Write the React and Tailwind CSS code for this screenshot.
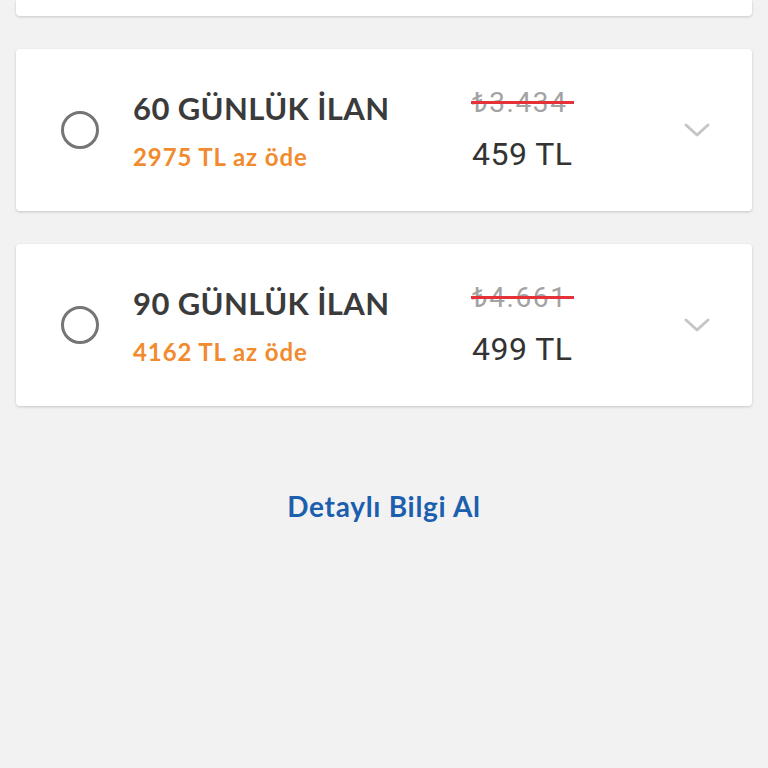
import React from "react";

const plans = [
  { days: 60, save: 2975, oldPrice: "₺3.434", price: "459 TL" },
  { days: 90, save: 4162, oldPrice: "₺4.661", price: "499 TL" },
];

function Chevron() {
  return (
    <svg width="26" height="16" viewBox="0 0 26 16" fill="none">
      <path d="M2 3l11 10L24 3" stroke="#c6c6c6" strokeWidth="3" strokeLinecap="round" strokeLinejoin="round" />
    </svg>
  );
}

function PlanCard({ plan }) {
  return (
    <div className="h-[162px] bg-white rounded-[4px] shadow-[0_1px_3px_rgba(0,0,0,0.18)] flex items-center pl-[45px]">
      <div className="w-[38px] h-[38px] rounded-full border-[3.5px] border-[#757575] shrink-0" />
      <div className="ml-[34px] w-[339px] flex flex-col">
        <div className="text-[31px] leading-[38px] tracking-[0.4px] font-bold text-[#3b3b3b] font-['Lato',sans-serif]">
          {plan.days} GÜNLÜK İLAN
        </div>
        <div className="mt-[15px] text-[24px] leading-[30px] tracking-[0.9px] font-bold text-[#f28a2e] font-['Lato',sans-serif]">
          {plan.save} TL az öde
        </div>
      </div>
      <div className="flex flex-col w-[212px]">
        <div className="relative self-start">
          <span className="text-[28px] leading-[32px] tracking-[1.6px] text-[#a3a3a3] font-['Roboto',sans-serif]">{plan.oldPrice}</span>
          <div className="absolute left-[-1px] right-[-6px] top-[14px] h-[3px] bg-[#e53238]" />
        </div>
        <div className="mt-[16px] text-[32px] leading-[38px] tracking-[0.5px] text-[#333333] font-['Roboto',sans-serif]">
          {plan.price}
        </div>
      </div>
      <Chevron />
    </div>
  );
}

export default function App() {
  return (
    <div className="w-[768px] h-[768px] bg-[#f2f2f2] px-4 flex flex-col overflow-hidden">
      <div className="h-[16px] bg-white rounded-b-[4px] shadow-[0_1px_3px_rgba(0,0,0,0.18)]" />
      <div className="mt-[33px] flex flex-col gap-[33px]">
        {plans.map((p) => (
          <PlanCard key={p.days} plan={p} />
        ))}
      </div>
      <div className="mt-[84px] text-center text-[28px] leading-[32px] tracking-[0.7px] font-bold text-[#1c5fae] font-['Lato',sans-serif]">
        Detaylı Bilgi Al
      </div>
    </div>
  );
}
